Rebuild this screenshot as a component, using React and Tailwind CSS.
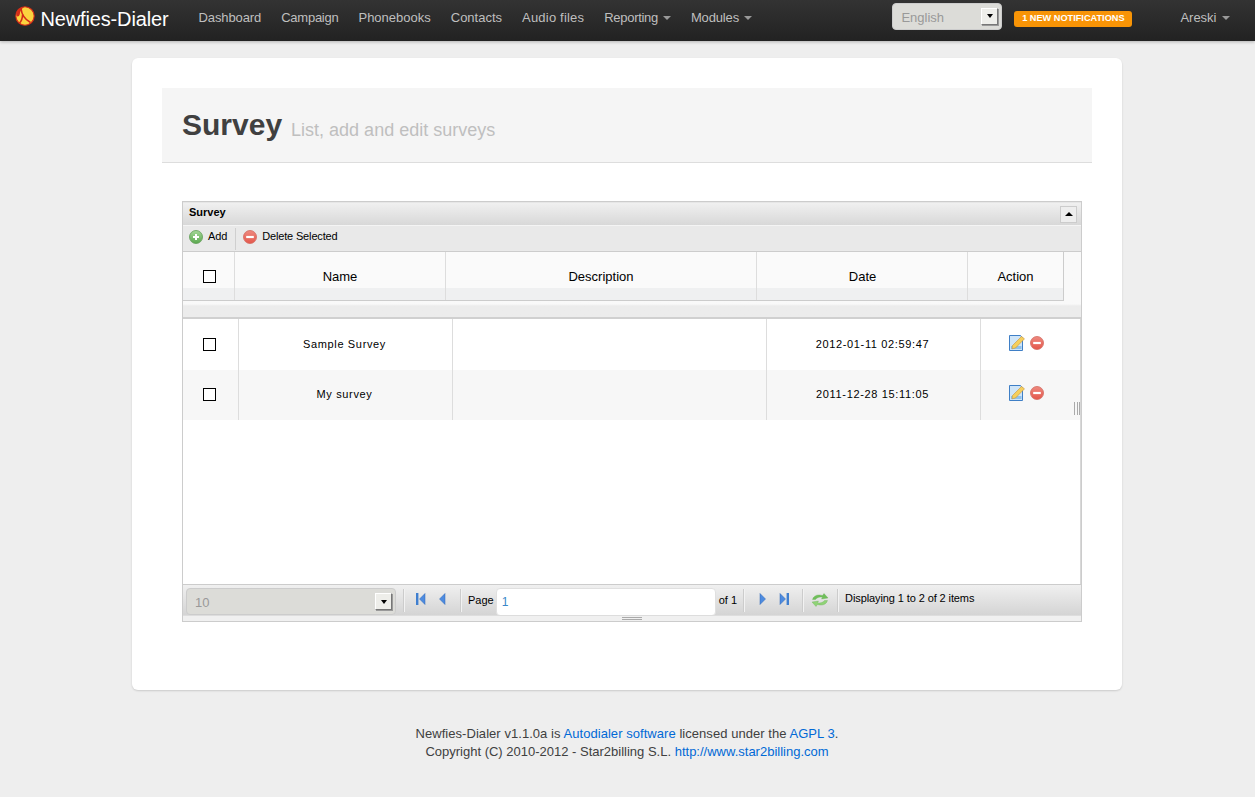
import React from "react";

const Caret = ({ className = "" }) => (
  <span className={"inline-block w-0 h-0 border-x-4 border-x-transparent border-t-4 border-t-[#999] ml-[5px] align-middle " + className} />
);

const Logo = () => (
  <svg width="20" height="20" viewBox="0 0 20 20" className="shrink-0 -mt-[9px]">
    <circle cx="10" cy="10" r="9.2" fill="#fbd33f" stroke="#d42a18" strokeWidth="1.1" />
    <path d="M1.5 8 A9 9 0 0 1 9 1 C6.5 3 5 5 4.8 8 C4.5 10 3 11 1.5 10Z" fill="#d42a18" />
    <path d="M6 2.5 C6.5 7 9 13 15.5 16.5" stroke="#d42a18" strokeWidth="1.6" fill="none" />
    <path d="M7.6 8.5 C7.5 12 6.5 15 4.5 17" stroke="#d42a18" strokeWidth="1.6" fill="none" />
  </svg>
);

const Check = () => <span className="block w-[13px] h-[13px] border border-black bg-white" />;

const Add = () => (
  <svg width="14" height="14" viewBox="0 0 14 14">
    <defs>
      <linearGradient id="ag" x1="0" y1="0" x2="0" y2="1">
        <stop offset="0" stopColor="#a6d89a" />
        <stop offset="1" stopColor="#5aa84e" />
      </linearGradient>
    </defs>
    <circle cx="7" cy="7" r="6.5" fill="url(#ag)" stroke="#5f9c55" strokeWidth="0.8" />
    <path d="M7 4V10M4 7H10" stroke="#fff" strokeWidth="2" />
  </svg>
);

const Del = () => (
  <svg width="14" height="14" viewBox="0 0 14 14" className="shrink-0">
    <defs>
      <linearGradient id="dg" x1="0" y1="0" x2="0" y2="1">
        <stop offset="0" stopColor="#ee8a80" />
        <stop offset="1" stopColor="#e4574b" />
      </linearGradient>
    </defs>
    <circle cx="7" cy="7" r="6.5" fill="url(#dg)" stroke="#d2685e" strokeWidth="0.8" />
    <rect x="3.2" y="5.9" width="7.6" height="2.2" fill="#fff" />
  </svg>
);

const Edit = () => (
  <svg width="16" height="16" viewBox="0 0 16 16" className="shrink-0">
    <path d="M.5.5H11.5L13.5 3V15.5H.5Z" fill="#cfe5f8" stroke="#3f7fc6" />
    <rect x="2" y="11" width="10.5" height="3" fill="#8fc2ee" />
    <path d="M3.5 10.5 L12.5 1.5 L15.5 3.8 L6.5 13 L3 13.8Z" fill="#f6cf5c" stroke="#c8963a" strokeWidth="0.6" />
  </svg>
);

const Sep = ({ cls = "" }) => <span className={"w-[2px] h-[23px] border-l border-[#ccc] bg-[#f2f2f2] shrink-0 " + cls} />;

const Arrow = ({ dir, bar }) => (
  <svg width="12" height="14" viewBox="0 0 12 14" className="shrink-0">
    {dir === "l" ? (
      <>
        {bar && <rect x="1" y="1" width="2.4" height="12" fill="#3f7fd0" />}
        <path d="M10 1.5V12.5L4.5 7Z" fill="#4d8be0" stroke="#2f66b5" strokeWidth="0.5" />
      </>
    ) : (
      <>
        <path d="M2 1.5V12.5L7.5 7Z" fill="#4d8be0" stroke="#2f66b5" strokeWidth="0.5" />
        {bar && <rect x="8.6" y="1" width="2.4" height="12" fill="#3f7fd0" />}
      </>
    )}
  </svg>
);

const Refresh = () => (
  <svg width="18" height="16" viewBox="0 0 18 16">
    <path d="M1.5 7.5C2.5 3.5 7 2 11.5 3.5L13 1.5L17 6L10.5 7L11.5 5.3C8.5 4.6 6 5.5 4.5 7.5Z" fill="#6fbf5a" stroke="#5ba548" strokeWidth="0.3" />
    <path d="M16.5 8.5C15.5 12.5 11 14 6.5 12.5L5 14.5L1 10L7.5 9L6.5 10.7C9.5 11.4 12 10.5 13.5 8.5Z" fill="#8fd376" stroke="#5ba548" strokeWidth="0.3" />
  </svg>
);

const SelectBtn = () => (
  <span className="flex items-center justify-center w-[17px] h-[17px] bg-[#eeeeea] border border-t-white border-l-white border-r-[#777] border-b-[#777] shadow-[1px_1px_0_#999]">
    <span className="w-0 h-0 border-x-[3.5px] border-x-transparent border-t-[4px] border-t-black" />
  </span>
);

const navItems = [
  { t: "Dashboard", c: "tracking-[-0.1px]" },
  { t: "Campaign", c: "tracking-[-0.25px]" },
  { t: "Phonebooks", c: "" },
  { t: "Contacts", c: "" },
  { t: "Audio files", c: "tracking-[0.2px]" },
];

const rows = [
  { name: "Sample Survey", date: "2012-01-11 02:59:47", bg: "bg-white", pad: "" },
  { name: "My survey", date: "2011-12-28 15:11:05", bg: "bg-[#f7f7f7]", pad: "pb-[2px]" },
];

export default function App() {
  return (
    <div className="min-h-[797px] bg-[#eeeeee] font-['Liberation_Sans',Arial,sans-serif] text-[13px] text-[#333] flex flex-col items-center pr-px">
      <header className="w-[1255px] h-[41px] shrink-0 bg-gradient-to-b from-[#333333] to-[#222222] shadow-[0_1px_3px_rgba(0,0,0,0.25)] flex items-center pl-[15px] pr-[25px]">
        <Logo />
        <span className="ml-[6px] text-[20px] text-white font-light leading-none w-[147px] tracking-[-0.15px] -mt-[4px]">Newfies-Dialer</span>
        <nav className="flex items-center gap-[20px] text-[#bfbfbf] text-[13px] ml-[11px] -mt-[6px]">
          {navItems.map((n) => (
            <span key={n.t} className={n.c}>{n.t}</span>
          ))}
          <span className="tracking-[-0.3px]">Reporting<Caret /></span>
          <span className="tracking-[-0.15px]">Modules<Caret /></span>
        </nav>
        <div className="ml-auto -mt-[9px] w-[110px] h-[27px] rounded-[4px] bg-[#dcdcd8] border border-[#ccc] flex items-center justify-between pl-[8px] pr-[3px] text-[#999] text-[13px]">
          <span className="mt-[4px]">English</span>
          <SelectBtn />
        </div>
        <span className="ml-[12px] -mt-[4px] h-[16px] w-[118px] rounded-[3px] bg-[#f89406] text-white font-bold text-[9.2px] flex items-center justify-center whitespace-nowrap">
          1 NEW NOTIFICATIONS
        </span>
        <span className="ml-[48px] -mt-[6px] text-[#bfbfbf]">Areski<Caret /></span>
      </header>

      <main className="mt-[17px] w-[990px] h-[632px] shrink-0 bg-white rounded-[6px] shadow-[0_1px_2px_rgba(0,0,0,0.15)] pt-[30px] px-[30px]">
        <div className="h-[75px] bg-[#f5f5f5] border-b border-[#dddddd] flex items-center pl-[20px]">
          <h1 className="text-[30px] font-bold text-[#404040] leading-none">Survey</h1>
          <span className="ml-[9px] mt-[9px] text-[18px] text-[#bfbfbf] leading-none">List, add and edit surveys</span>
        </div>

        <section className="mt-[38px] mx-[20px] w-[900px] h-[421px] border border-[#ccc] flex flex-col text-black bg-white">
          <div className="h-[23px] shrink-0 border-t border-[#e6e6e6] bg-gradient-to-b from-[#f0f0f0] to-[#d8d8d8] flex items-center justify-between pl-[6px] pr-[4px]">
            <span className="text-[11px] font-bold -mt-[3px]">Survey</span>
            <span className="w-[17px] h-[17px] bg-[#eeeeee] border border-[#ccc] flex items-center justify-center">
              <span className="w-0 h-0 border-x-[4px] border-x-transparent border-b-[4px] border-b-black" />
            </span>
          </div>
          <div className="h-[27px] shrink-0 border-t border-[#f4f4f4] border-b border-b-[#cccccc] bg-[#e9e9e9] flex items-center pl-[6px] text-[11px] tracking-[-0.15px]">
            <span className="-mt-[4px]"><Add /></span>
            <span className="ml-[5px] -mt-[5px]">Add</span>
            <span className="ml-[8px] h-[22px] w-px bg-[#cfcfcf]" />
            <span className="ml-[7px] -mt-[4px]"><Del /></span>
            <span className="ml-[5px] -mt-[5px]">Delete Selected</span>
          </div>

          <div className="h-[67px] shrink-0 relative bg-gradient-to-b from-[#f9f9f9] from-[52px] to-[#ececec] to-[54px] border-b-2 border-[#d0d0d0]">
            <div className="h-[49px] w-[881px] flex border-b border-[#cccccc] text-[13px] bg-[linear-gradient(#fafafa_36px,#eff0f1_36px)]">
              <div className="w-[52px] border-r border-[#dddddd] flex items-center justify-center pl-[1px]"><Check /></div>
              <div className="w-[211px] border-r border-[#dddddd] flex items-center justify-center pt-[1px]">Name</div>
              <div className="w-[311px] border-r border-[#dddddd] flex items-center justify-center pt-[1px]">Description</div>
              <div className="w-[211px] border-r border-[#dddddd] flex items-center justify-center pt-[1px] pl-[1px]">Date</div>
              <div className="w-[96px] border-r border-[#cccccc] flex items-center justify-center pt-[1px]">Action</div>
            </div>
          </div>

          <div className="flex-1 min-h-0 border-r border-r-[#d8d8d8]">
            {rows.map((r, i) => (
              <div key={r.name} className={"flex text-[11px] tracking-[0.65px] " + r.bg + (i === 0 ? " h-[51px]" : " h-[50px]")}>
                <div className={"w-[56px] border-r border-[#dddddd] flex items-center justify-center pr-[2px] " + r.pad}><Check /></div>
                <div className={"w-[214px] border-r border-[#dddddd] flex items-center justify-center pr-[2px] " + r.pad}>{r.name}</div>
                <div className="w-[314px] border-r border-[#dddddd]" />
                <div className={"w-[214px] border-r border-[#dddddd] flex items-center justify-center pr-[2px] " + r.pad}>{r.date}</div>
                <div className="flex-1 relative flex items-center justify-center gap-[5px] pb-[4px] pr-[8px]">
                  <Edit />
                  <Del />
                  {i === 1 && <span className="absolute right-0 bottom-[5px] w-[6px] h-[13px] border-x border-[#aaa] bg-[linear-gradient(90deg,transparent_2px,#aaa_2px,#aaa_3px,transparent_3px)]" />}
                </div>
              </div>
            ))}
          </div>

          <div className="h-[31px] shrink-0 border-t border-[#cccccc] bg-gradient-to-b from-[#f0f0f0] to-[#d4d4d4] flex items-center pl-[3px] text-[11px]">
            <div className="w-[210px] h-[27px] mt-[3px] rounded-[4px] bg-[#dcdcd8] border border-[#ccc] flex items-center justify-between pl-[8px] pr-[3px] text-[#999] text-[13px] shrink-0">
              <span className="mt-[2px]">10</span>
              <SelectBtn />
            </div>
            <Sep cls="ml-[7px]" />
            <span className="ml-[10px] -mt-[2px] flex gap-[8px]"><Arrow dir="l" bar /><Arrow dir="l" /></span>
            <Sep cls="ml-[13px]" />
            <span className="ml-[6px]">Page</span>
            <span className="ml-[2px] mt-[3px] w-[220px] h-[28px] rounded-[4px] bg-white border border-[#e0e0e0] text-[#3a87c8] text-[12px] flex items-center pl-[5px] shrink-0">1</span>
            <span className="ml-[3px]">of 1</span>
            <Sep cls="ml-[6px]" />
            <span className="ml-[13px] -mt-[2px] flex gap-[8px]"><Arrow dir="r" /><Arrow dir="r" bar /></span>
            <Sep cls="ml-[12px]" />
            <span className="ml-[7px]"><Refresh /></span>
            <Sep cls="ml-[8px]" />
            <span className="ml-[6px] -mt-[3px] tracking-[-0.1px]">Displaying 1 to 2 of 2 items</span>
          </div>
          <div className="h-[6px] shrink-0 bg-[#f0f0f0] border-t border-[#ddd] flex flex-col items-center justify-center gap-[1px]">
            <span className="w-[20px] h-px bg-[#aaa]" />
            <span className="w-[20px] h-px bg-[#aaa]" />
          </div>
        </section>
      </main>

      <footer className="mt-[35px] text-center text-[13px] leading-[18px] text-[#404040]">
        <p className="tracking-[0.05px]">Newfies-Dialer v1.1.0a is <span className="text-[#0069d6]">Autodialer software</span> licensed under the <span className="text-[#0069d6]">AGPL 3</span>.</p>
        <p>Copyright (C) 2010-2012 - Star2billing S.L. <span className="text-[#0069d6]">http://www.star2billing.com</span></p>
      </footer>
    </div>
  );
}
